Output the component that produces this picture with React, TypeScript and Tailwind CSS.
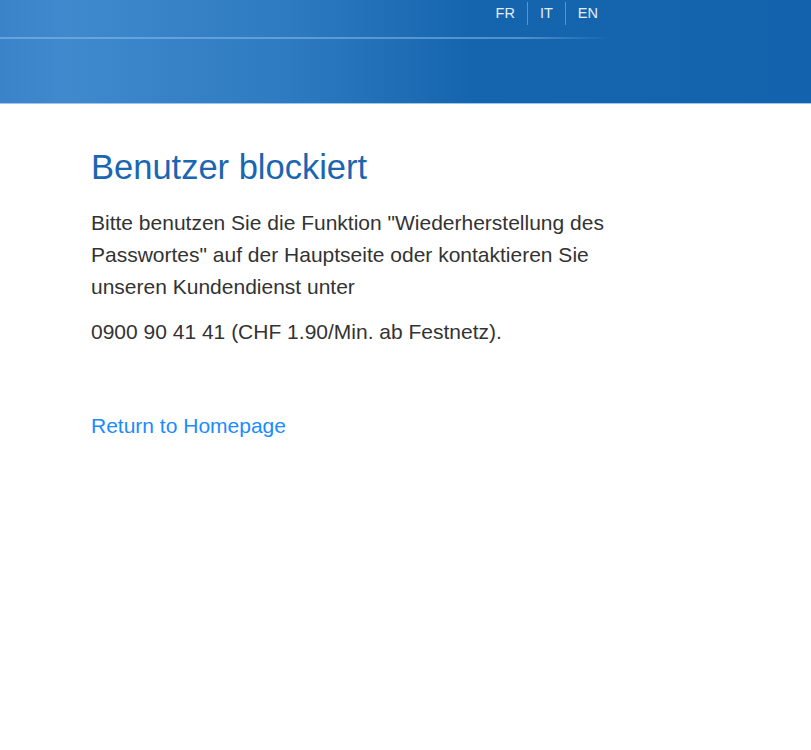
export default function App() {
  const langs = ['FR', 'IT', 'EN']

  return (
    <div className="min-h-[750px] bg-white" style={{ fontFamily: '"Liberation Sans", Arial, sans-serif' }}>
      {/* Header */}
      <header className="h-[104px] border-b border-[#9cc6ee] bg-[linear-gradient(90deg,#3a83c8_0%,#4089cd_8%,#2e7bc1_35%,#1565ae_58%,#1262ad_100%)]">
        <div className="w-[612px]">
          <nav className="flex justify-end h-[25px] pt-[2px] pr-[2px]">
            {langs.map((l, i) => (
              <a
                key={l}
                href="#"
                className={
                  'px-[12px] text-[14.5px] leading-[22px] text-[#e4eef8] ' +
                  (i > 0 ? 'border-l border-[#5b93cc]' : '')
                }
              >
                {l}
              </a>
            ))}
          </nav>
          <div className="mt-[12px] h-[2px] bg-[linear-gradient(90deg,rgba(140,190,235,0.55)_0%,rgba(140,190,235,0.5)_85%,rgba(140,190,235,0)_100%)]" />
        </div>
      </header>

      {/* Content */}
      <main className="pl-[91px] pt-[41px] w-[650px]">
        <h1 className="text-[34.5px] leading-[44px] text-[#1b66b1]">Benutzer blockiert</h1>
        <p className="mt-[18px] text-[21px] leading-[32px] text-[#333333]">
          Bitte benutzen Sie die Funktion "Wiederherstellung des Passwortes" auf der Hauptseite oder kontaktieren Sie unseren Kundendienst unter
        </p>
        <p className="mt-[13px] text-[21px] leading-[32px] text-[#333333]">
          0900 90 41 41 (CHF 1.90/Min. ab Festnetz).
        </p>
        <a href="#" className="block mt-[62px] text-[21px] leading-[32px] text-[#1a8cff]">
          Return to Homepage
        </a>
      </main>
    </div>
  )
}
